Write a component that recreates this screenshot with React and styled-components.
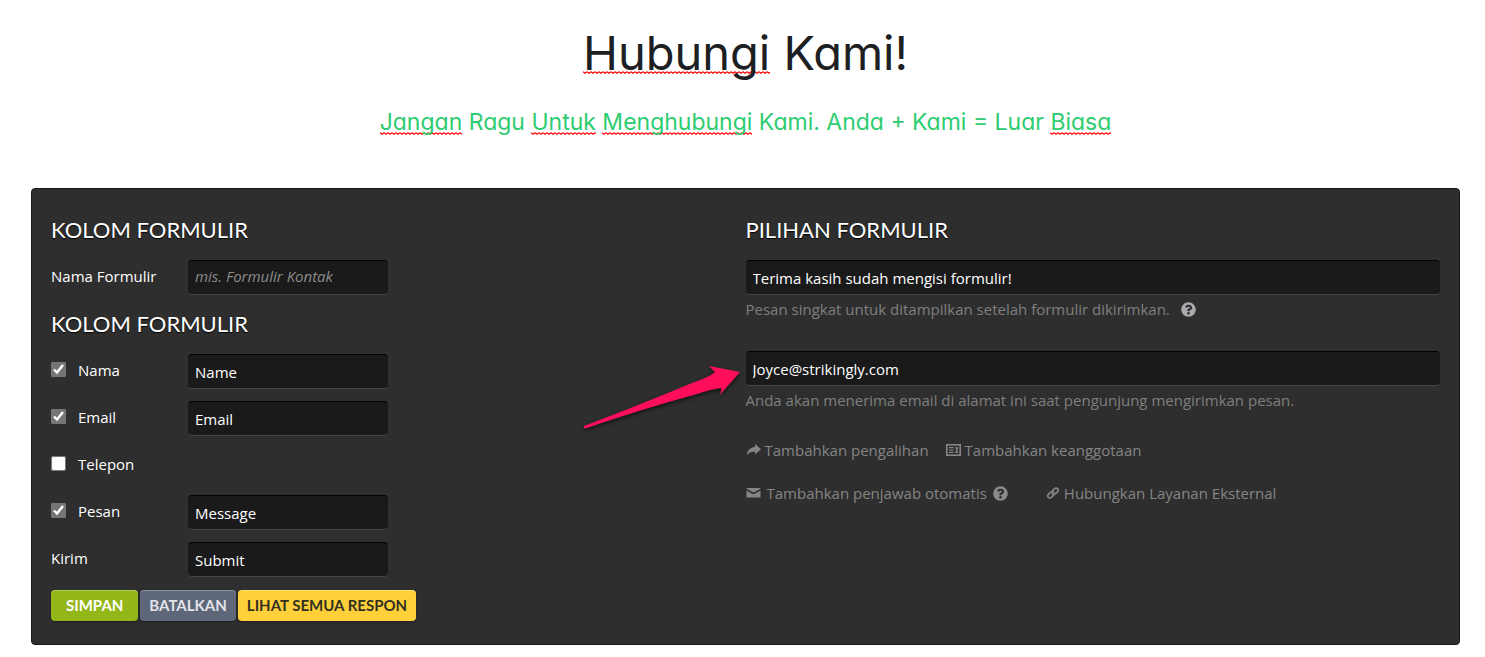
import React, { useState } from 'react';
import styled, { createGlobalStyle, css } from 'styled-components';
import { FaQuestionCircle } from 'react-icons/fa';

const GlobalStyle = createGlobalStyle`
    * {
        box-sizing: border-box;
    }
    body {
        margin: 0;
        background: #fff;
        font-family: "Open Sans", "Noto Sans", sans-serif;
        font-size: 15px;
    }
`

const Page = styled.main`
    padding: 22px 25px 12px 31px;
`

const Header = styled.header`
    display: flex;
    flex-direction: column;
    align-items: center;
    gap: 18px;
    padding-bottom: 48px;
    font-family: Inter, sans-serif;
    font-feature-settings: "cv11";
    text-align: center;
`

const Title = styled.h1`
    margin: 0;
    color: #1d2023;
    font-size: 47px;
    font-weight: 400;
    line-height: 62px;
    padding-bottom: 2px;
`

const Subtitle = styled.h2`
    margin: 0;
    color: #2ecc71;
    font-size: 23px;
    font-weight: 400;
    line-height: 36px;
`

const squiggle = `url("data:image/svg+xml,%3Csvg xmlns='http://www.w3.org/2000/svg' width='4' height='3'%3E%3Cpath d='M0 .8L2 2.2L4 .8' fill='none' stroke='%23ff0000' stroke-width='1.3'/%3E%3C/svg%3E")`

const Misspelled = styled.span`
    background: ${squiggle} repeat-x left bottom ${({ $raise }) => $raise}px;
`

const Panel = styled.form`
    display: grid;
    grid-template-columns: 1fr 1fr;
    padding: 24px 19px 23px;
    border: 1px solid #1a1a1a;
    border-radius: 4px;
    background: #2e2e2e;
    color: #fff;
`

const Column = styled.section`
    display: flex;
    flex-direction: column;
    gap: 12px;
`

const Heading = styled.h3`
    margin: 0;
    padding-bottom: 2px;
    font-family: Lato, sans-serif;
    font-size: 22px;
    font-weight: 400;
    line-height: 33px;
    text-transform: uppercase;
    text-shadow: 0 1px 1px #000;
`

const Row = styled.div`
    display: flex;
    align-items: center;
    height: 35px;
`

const Label = styled.label`
    display: flex;
    align-items: center;
    gap: 12px;
    width: 137px;
    padding-bottom: 4px;
`

const Checkbox = styled.input`
    width: 15px;
    height: 15px;
    margin: 0;
    accent-color: #757575;
`

const TextInput = styled.input`
    width: ${({ $wide }) => ($wide ? '100%' : '200px')};
    height: 35px;
    padding: 0 7px;
    border: 0;
    border-top: 1px solid #000;
    border-bottom: 1px solid #444;
    border-radius: 4px;
    background: #1a1a1a;
    color: #fff;
    font: inherit;
    outline: none;

    &::placeholder {
        color: #8c8c8c;
        font-style: italic;
    }

    &:placeholder-shown {
        padding-bottom: 3px;
    }
`

const Actions = styled.div`
    display: flex;
    align-items: flex-end;
    gap: 2px;
    height: 32px;
`

const variants = {
    save: css`
        padding: 0 15px 2px;
        background: #93b719;
        color: #fff;
    `,
    cancel: css`
        background: #5e6779;
        color: #e2e4ea;
    `,
    view: css`
        background: #ffd03a;
        color: #32301f;
    `,
}

const Button = styled.button`
    height: 31px;
    padding: 0 9px 2px;
    border: 0;
    border-radius: 4px;
    box-shadow: inset 0 1px 0 rgba(255, 255, 255, 0.3), 0 1px 2px rgba(0, 0, 0, 0.4);
    font-family: Lato, sans-serif;
    font-size: 15px;
    font-weight: 700;
    text-transform: uppercase;
    white-space: nowrap;
    ${({ $variant }) => variants[$variant]}
`

const Field = styled.div`
    position: relative;
    margin-bottom: 16px;
`

const Hint = styled.p`
    display: flex;
    align-items: center;
    gap: 11px;
    margin: 0;
    color: #7f7f7f;
    line-height: 28px;
`

const HelpIcon = styled(FaQuestionCircle)`
    width: 15px;
    height: 15px;
    color: ${({ $dim }) => ($dim ? '#8a8a8a' : '#a9abae')};
`

const Pointer = styled.svg`
    position: absolute;
    top: 13px;
    right: calc(100% + 4px);
    filter: drop-shadow(0 2px 2px rgba(0, 0, 0, 0.6));
    pointer-events: none;
`

const LinkRow = styled.div`
    display: flex;
    align-items: center;
    gap: ${({ $gap }) => $gap}px;
    height: 16px;
    margin-bottom: 15px;
`

const OptionGroup = styled.span`
    display: flex;
    align-items: center;
    gap: 6px;
`

const OptionLink = styled.a`
    display: flex;
    align-items: center;
    gap: ${({ $gap }) => $gap || 4}px;
    color: #858585;
    text-decoration: none;
`

const ShareIcon = () => (
    <svg width="15" height="16" viewBox="0 0 15 16" fill="currentColor" aria-hidden="true">
        <path d="M9 2L15 7.3L9 12.6V9.8C5.5 9.5 3 10.4 .6 13.2C1.4 8.4 4.2 5.2 9 4.9z" />
    </svg>
)

const CardIcon = () => (
    <svg width="15" height="14" viewBox="0 0 15 14" aria-hidden="true">
        <rect x=".8" y="1.8" width="13.4" height="10.4" fill="none" stroke="currentColor" strokeWidth="1.6" />
        <path d="M3 4.6h4.6M3 7h4.6M3 9.4h4.6" stroke="currentColor" strokeWidth="1.2" />
        <path d="M9.4 4h2.4v3.6h-.6v1h1v1.4h-3v-1.400h1v-2.800h-.8z" fill="currentColor" />
    </svg>
)

const MailIcon = () => (
    <svg width="15" height="12" viewBox="0 0 15 12" fill="currentColor" aria-hidden="true">
        <path d="M.7 1H14.3C14.6 1.5 14.2 1.9 13.7 2.2L8.2 5.2Q7.5 5.6 6.8 5.2L1.3 2.2C.8 1.9.4 1.5.7 1z" />
        <path d="M.5 3.6L6.6 6.9Q7.5 7.3 8.4 6.9L14.5 3.6V10.6H.5z" />
    </svg>
)

const ChainIcon = () => (
    <svg width="14" height="14" viewBox="0 0 14 14" fill="none" stroke="currentColor" strokeWidth="1.7" strokeLinecap="round" aria-hidden="true">
        <path d="M6.3 4.8L8.3 2.8Q10 1.4 11.6 2.6Q13 4 11.6 5.6L9.6 7.6Q7.800 8.800 6.200 7.700" />
        <path d="M7.7 9.2L5.7 11.2Q4 12.6 2.4 11.4Q1 10 2.400 8.400L4.400 6.400Q6.200 5.200 7.800 6.300" />
    </svg>
)

const FieldRow = ({ id, label, value, placeholder, checkable, checked }) => {
    const [enabled, setEnabled] = useState(checked)
    return (
        <Row>
            <Label htmlFor={checkable ? `${id}-enabled` : id}>
                {checkable && (
                    <Checkbox
                        id={`${id}-enabled`}
                        type="checkbox"
                        checked={enabled}
                        onChange={(e) => setEnabled(e.target.checked)}
                    />
                )}
                {label}
            </Label>
            {(!checkable || enabled) && (
                <TextInput id={id} type="text" aria-label={label} defaultValue={value} placeholder={placeholder} />
            )}
        </Row>
    )
}

const App = () => (
    <>
        <GlobalStyle />
        <Page>
            <Header>
                <Title><Misspelled $raise={7}>Hubungi</Misspelled> Kami!</Title>
                <Subtitle>
                    <Misspelled $raise={1}>Jangan</Misspelled> Ragu <Misspelled $raise={1}>Untuk</Misspelled>{' '}
                    <Misspelled $raise={1}>Menghubungi</Misspelled> Kami. Anda + Kami = Luar{' '}
                    <Misspelled $raise={1}>Biasa</Misspelled>
                </Subtitle>
            </Header>
            <Panel onSubmit={(e) => e.preventDefault()}>
                <Column>
                    <Heading>Kolom Formulir</Heading>
                    <FieldRow id="form-name" label="Nama Formulir" placeholder="mis. Formulir Kontak" />
                    <Heading>Kolom Formulir</Heading>
                    <FieldRow id="name" label="Nama" value="Name" checkable checked />
                    <FieldRow id="email" label="Email" value="Email" checkable checked />
                    <FieldRow id="phone" label="Telepon" value="Phone" checkable checked={false} />
                    <FieldRow id="message" label="Pesan" value="Message" checkable checked />
                    <FieldRow id="submit" label="Kirim" value="Submit" />
                    <Actions>
                        <Button type="submit" $variant="save">Simpan</Button>
                        <Button type="button" $variant="cancel">Batalkan</Button>
                        <Button type="button" $variant="view">Lihat Semua Respon</Button>
                    </Actions>
                </Column>
                <Column>
                    <Heading>Pilihan Formulir</Heading>
                    <Field>
                        <TextInput
                            $wide
                            type="text"
                            aria-label="Pesan singkat"
                            aria-describedby="thanks-hint"
                            defaultValue="Terima kasih sudah mengisi formulir!"
                        />
                        <Hint id="thanks-hint">
                            Pesan singkat untuk ditampilkan setelah formulir dikirimkan. <HelpIcon />
                        </Hint>
                    </Field>
                    <Field>
                        <TextInput
                            $wide
                            type="email"
                            aria-label="Alamat email"
                            aria-describedby="recipient-hint"
                            defaultValue="Joyce@strikingly.com"
                        />
                        <Hint id="recipient-hint">
                            Anda akan menerima email di alamat ini saat pengunjung mengirimkan pesan.
                        </Hint>
                        <Pointer width="160" height="70" viewBox="0 0 160 70" aria-hidden="true">
                            <path
                                d="M158 8L127 2L133 8Q128 13 110 19Q60 40 2 62Q1 64 3 64.5Q60 45 115 30Q130 25 139 24Q140 27 137 32z"
                                fill="#ff0f5b"
                            />
                        </Pointer>
                    </Field>
                    <LinkRow $gap={17}>
                        <OptionLink href="#redirect"><ShareIcon />Tambahkan pengalihan</OptionLink>
                        <OptionLink href="#membership"><CardIcon />Tambahkan keanggotaan</OptionLink>
                    </LinkRow>
                    <LinkRow $gap={38}>
                        <OptionGroup>
                            <OptionLink href="#autoresponder" $gap={6}><MailIcon />Tambahkan penjawab otomatis</OptionLink>
                            <HelpIcon $dim />
                        </OptionGroup>
                        <OptionLink href="#integrations"><ChainIcon />Hubungkan Layanan Eksternal</OptionLink>
                    </LinkRow>
                </Column>
            </Panel>
        </Page>
    </>
)

export default App;
